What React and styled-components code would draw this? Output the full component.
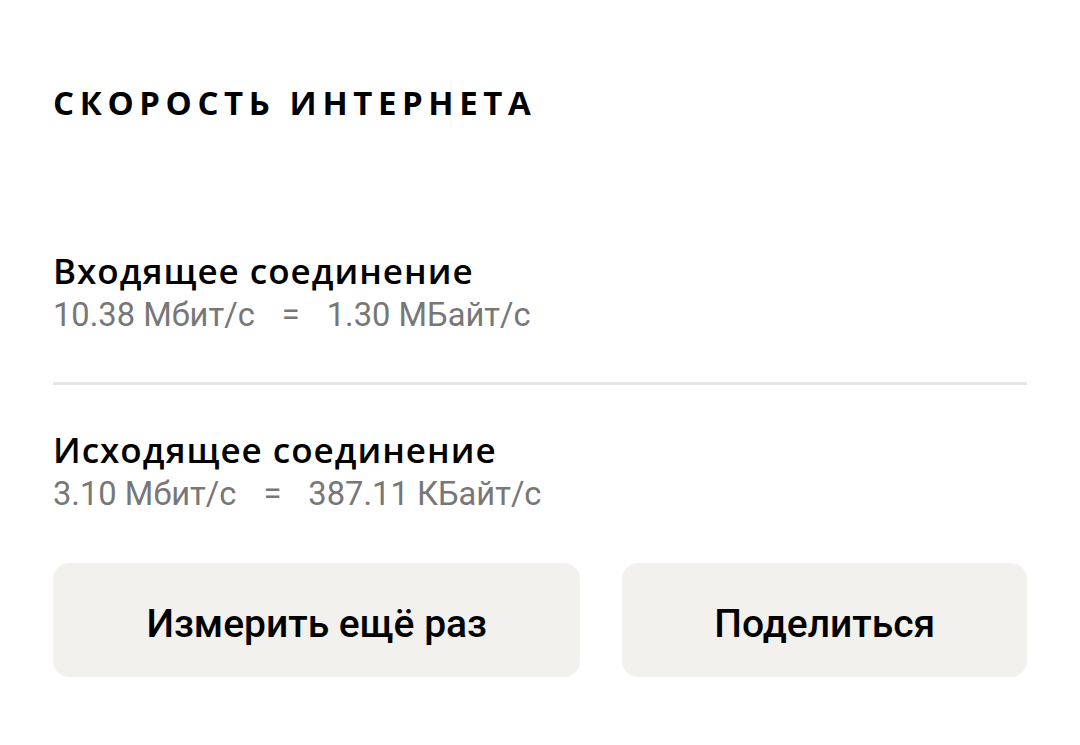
import React from "react";
import styled, { createGlobalStyle } from "styled-components";

const Global = createGlobalStyle`
  html, body { margin: 0; padding: 0; background: #ffffff; }
  body { font-family: Roboto, "Noto Sans", sans-serif; }
`;

const Page = styled.div`
  width: 1080px;
  height: 745px;
  box-sizing: border-box;
  padding: 83px 53px 0 53px;
  display: flex;
  flex-direction: column;
`;

const Title = styled.h1`
  margin: 0;
  font-family: "Open Sans", sans-serif;
  font-weight: 700;
  font-size: 33px;
  line-height: 40px;
  letter-spacing: 5.6px;
  color: #000;
`;

const Section = styled.div`
  display: flex;
  flex-direction: column;
  padding: ${(p) => p.$pad};
`;

const Heading = styled.div`
  font-family: "Open Sans", sans-serif;
  font-size: 35px;
  line-height: 44px;
  letter-spacing: 1px;
  font-weight: 600;
  color: #000;
`;

const Speed = styled.div`
  font-family: Roboto, sans-serif;
  font-size: 32.7px;
  line-height: 44px;
  color: #777777;
  display: flex;
  gap: 27px;
  white-space: pre;
`;

const Divider = styled.div`
  height: 3px;
  background: #e6e6e6;
`;

const Buttons = styled.div`
  display: flex;
  gap: 42px;
  margin-top: 47px;
`;

const Button = styled.button`
  width: ${(p) => p.$w}px;
  height: 114px;
  box-sizing: border-box;
  padding: 8px 0 0 0;
  border: none;
  border-radius: 16px;
  background: #f2f1ed;
  font-family: Roboto, sans-serif;
  font-size: 39px;
  font-weight: 500;
  color: #000;
`;

export default function App() {
  return (
    <>
      <Global />
      <Page>
        <Title>СКОРОСТЬ ИНТЕРНЕТА</Title>
        <Section $pad="126px 0 45px 0">
          <Heading>Входящее соединение</Heading>
          <Speed>
            <span>10.38 Мбит/с</span>
            <span>=</span>
            <span>1.30 МБайт/с</span>
          </Speed>
        </Section>
        <Divider />
        <Section $pad="43px 0 0 0">
          <Heading>Исходящее соединение</Heading>
          <Speed>
            <span>3.10 Мбит/с</span>
            <span>=</span>
            <span>387.11 КБайт/с</span>
          </Speed>
        </Section>
        <Buttons>
          <Button $w={528}>Измерить ещё раз</Button>
          <Button $w={405}>Поделиться</Button>
        </Buttons>
      </Page>
    </>
  );
}
